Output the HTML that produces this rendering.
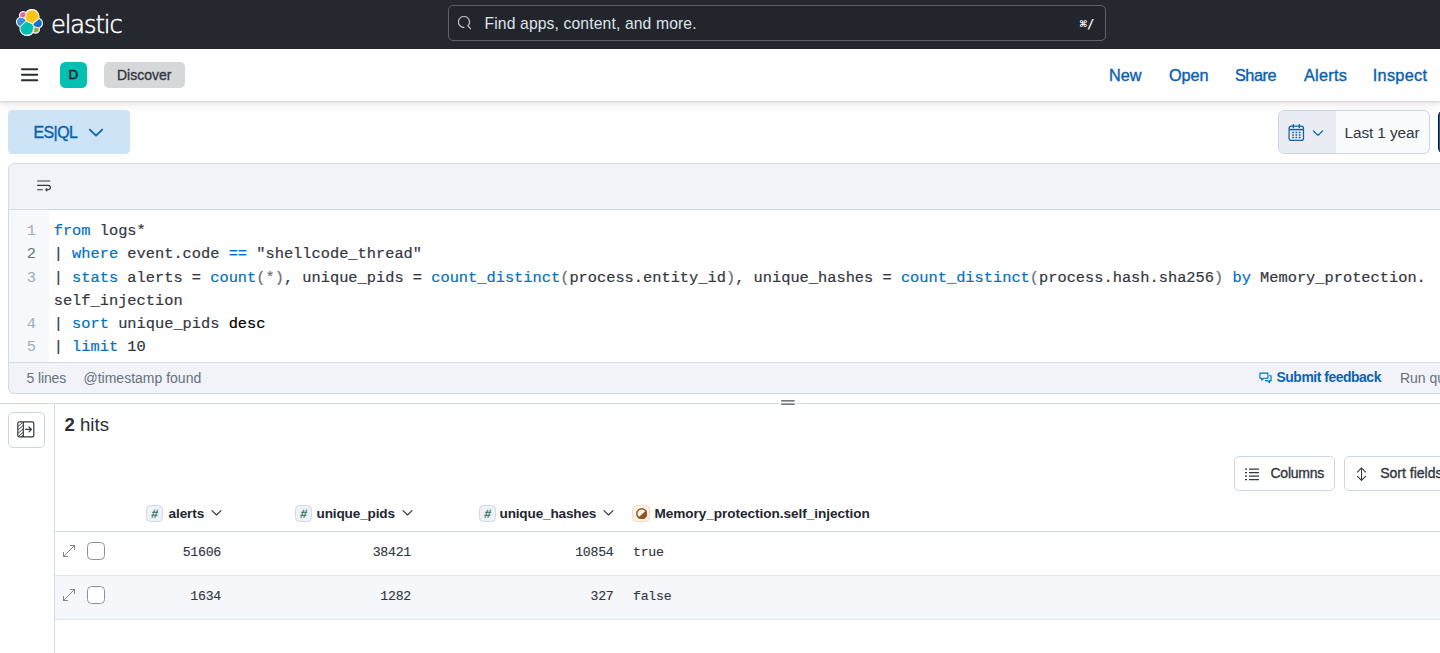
<!DOCTYPE html>
<html lang="en">
<head>
<meta charset="utf-8">
<title>Discover - Elastic</title>
<style>
*{box-sizing:border-box;margin:0;padding:0}
html,body{width:1440px;height:653px;overflow:hidden;background:#fff}
body{font-family:"Liberation Sans",sans-serif;color:#343741;position:relative;-webkit-font-smoothing:antialiased}
.abs{position:absolute}
.t{position:absolute;white-space:nowrap;line-height:1}
/* top dark header */
#hdr{left:0;top:0;width:1440px;height:49px;background:#25282f}
#search{left:448px;top:5px;width:658px;height:36px;border:1px solid #5d626e;border-radius:5px;background:#22252c}
/* second bar */
#bar2{left:0;top:49px;width:1440px;height:53px;background:#fff;border-bottom:1px solid #d6dae2;box-shadow:0 .8px 1.5px rgba(0,0,0,.07),0 2.1px 4.4px rgba(0,0,0,.05),0 5px 11px rgba(0,0,0,.05)}
.lnk{color:#0b62ad;font-size:16.3px;font-weight:normal;-webkit-text-stroke:.4px #0b62ad}
/* editor */
#ed{left:8px;top:163px;width:1460px;height:231px;border:1px solid #d3dae6;border-radius:6px;background:#f1f3f9;overflow:hidden}
#code{left:0;top:45px;width:1460px;height:154px;background:#fff;border-top:1px solid #d3dae6;border-bottom:1px solid #d3dae6}
#gut{left:0;top:0;width:40px;height:152px;background:#f7f8fc}
.ln,.cl{position:absolute;font-family:"Liberation Mono",monospace;font-size:15.35px;line-height:23.1px;height:23.1px;white-space:pre}
.ln{left:0;width:27px;text-align:right;color:#a2abba}
.ln.cur{color:#69707d}
.cl{left:44.7px;color:#343741;-webkit-text-stroke:.2px}
.k{color:#0071c2}
.d{color:#000;-webkit-text-stroke:.22px #000}
.g{color:#69707d}
.sub{color:#69707d;font-size:14px}
/* table */
.mono{font-family:"Liberation Mono",monospace;font-size:13.2px;color:#343741;-webkit-text-stroke:.15px;margin-top:.6px;letter-spacing:-.25px}
.th{font-size:13.6px;font-weight:bold;color:#24262f}
.tok{position:absolute;width:17px;height:17.4px;margin-top:-.4px;border:1px solid #d0d8e6;border-radius:4.5px;background:#eff2f8}
.cb{position:absolute;margin-left:-.5px;width:18px;height:18px;border:1px solid #8e9199;border-radius:4.5px;background:#fff}
.btn{position:absolute;border:1px solid #ccd5e3;border-radius:5px;background:#fff}
/* width fitting */
#ph{letter-spacing:.13px}
#disc{letter-spacing:0px}
#l1{margin-left:-1px}
#l2{margin-left:-.5px;letter-spacing:-.1px}
#l3{letter-spacing:-.5px}
#l4{letter-spacing:.25px}
#l5{letter-spacing:.29px;margin-left:-1.25px}
#esql{letter-spacing:-.55px}
#ly{letter-spacing:-.1px}
#f1{letter-spacing:-.12px}
#hits{margin-left:1px}
#colb{letter-spacing:-.25px;margin-left:1px}
#sortb{margin-left:.7px}
#f4{margin-left:-.6px}
#f3{margin-left:0px;letter-spacing:-.45px}
#h1{margin-left:1px;letter-spacing:-.1px}
#h2{letter-spacing:-.15px}
#h3{letter-spacing:-.17px}
#h4{letter-spacing:-.05px;margin-left:.5px}
#kbd{letter-spacing:.6px;margin-left:.7px}
</style>
</head>
<body>
<!-- HEADER -->
<div id="hdr" class="abs">
  <svg class="abs" style="left:16px;top:9px" width="27" height="27" viewBox="0 0 32 32">
    <path fill="#fff" d="M32 16.77a6.334 6.334 0 0 0-1.14-3.63 6.298 6.298 0 0 0-3.03-2.33 9.04 9.04 0 0 0 .17-1.71 9.1 9.1 0 0 0-1.75-5.37A9.1 9.1 0 0 0 21.69.39a9.07 9.07 0 0 0-5.63-.06 9.1 9.1 0 0 0-4.6 3.26 4.84 4.84 0 0 0-5.99.03 4.86 4.86 0 0 0-1.52 5.78A6.39 6.39 0 0 0 .9 11.74 6.35 6.35 0 0 0 0 15.27a6.35 6.35 0 0 0 1.15 3.64 6.32 6.32 0 0 0 3.05 2.32 9.1 9.1 0 0 0 1.58 7.08 9.1 9.1 0 0 0 4.55 3.3 9.05 9.05 0 0 0 5.62.01 9.07 9.07 0 0 0 4.57-3.27 4.82 4.82 0 0 0 2.96 1.02 4.85 4.85 0 0 0 4.54-6.57 6.4 6.4 0 0 0 3.06-2.36 6.36 6.36 0 0 0 .92-3.67"/>
    <path fill="#FEC514" d="M12.58 13.787l7.002 3.211 7.066-6.213a7.85 7.85 0 0 0 .152-1.557c0-4.287-3.472-7.763-7.754-7.763a7.75 7.75 0 0 0-6.39 3.366l-1.178 6.108 1.102 2.848z"/>
    <path fill="#00BFB3" d="M5.333 21.215a7.94 7.94 0 0 0-.149 1.581c0 4.3 3.498 7.787 7.795 7.787a7.78 7.78 0 0 0 6.41-3.394l1.165-6.08-1.556-2.976-7.03-3.208-6.635 6.29z"/>
    <path fill="#e95e9f" d="M5.288 9.067l4.8 1.137L11.14 4.74a3.785 3.785 0 0 0-2.29-.77 3.802 3.802 0 0 0-3.8 3.802c0 .456.085.892.237 1.295"/>
    <path fill="#3b90d9" d="M4.872 10.214C2.728 10.925 1.231 12.986 1.231 15.284c0 2.237 1.381 4.234 3.455 5.023l6.735-6.1-1.237-2.647-5.312-1.346z"/>
    <path fill="#a2aa3c" d="M20.874 27.189a3.768 3.768 0 0 0 2.285.776 3.802 3.802 0 0 0 3.8-3.801c0-.457-.084-.893-.236-1.296l-4.795-1.124-1.054 5.445z"/>
    <path fill="#1a73c8" d="M21.85 20.563l5.28 1.237c2.146-.71 3.643-2.773 3.643-5.072 0-2.233-1.385-4.234-3.46-5.02l-6.907 6.063 1.444 2.792z"/>
  </svg>
  <div id="wm" class="t" style="left:51px;top:13px;font-family:'DejaVu Sans Light','DejaVu Sans',sans-serif;font-weight:200;font-size:24px;color:#fff;letter-spacing:-1.05px;-webkit-text-stroke:.55px #fff">elastic</div>
  <div id="search" class="abs">
    <svg class="abs" style="left:8.6px;top:10px" width="13.6" height="13.6" viewBox="0 0 16 16"><path fill="#cfd2d9" stroke="#cfd2d9" stroke-width=".35" d="M11.271 11.978l3.872 3.873a.502.502 0 0 0 .708 0 .5.5 0 0 0 0-.708l-3.565-3.564c2.38-2.747 2.267-6.923-.342-9.532-2.73-2.73-7.17-2.73-9.898 0-2.728 2.729-2.728 7.17 0 9.9a6.955 6.955 0 0 0 4.949 2.05.5.5 0 0 0 0-1 5.96 5.96 0 0 1-4.242-1.757 6.01 6.01 0 0 1 0-8.486c2.337-2.34 6.143-2.34 8.484 0a6.01 6.01 0 0 1 0 8.486.5.5 0 0 0 0 .708l.034.03z"/></svg>
    <div id="ph" class="t" style="left:35.5px;top:9.8px;font-size:15.7px;color:#dfe2e8">Find apps, content, and more.</div>
    <div id="kbd" class="t" style="left:630px;top:12px;font-family:'DejaVu Sans Mono','Liberation Mono',monospace;font-weight:bold;font-size:12px;color:#fff;letter-spacing:0px">&#8984;/</div>
  </div>
</div>
<div id="bar2" class="abs">
  <svg class="abs" style="left:20px;top:18px" width="20" height="16" viewBox="0 0 20 16"><path d="M2 2.3h15.2M2 7.8h15.2M2 13.3h15.2" stroke="#2b2e38" stroke-width="2.1" stroke-linecap="round" fill="none"/></svg>
  <div class="abs" style="left:60.3px;top:12.6px;width:26.3px;height:26.3px;border-radius:5.5px;background:#00bfb3"></div>
  <div id="avD" class="t" style="left:60.3px;top:18.8px;width:26.3px;text-align:center;font-size:13.4px;color:#1a1c21;-webkit-text-stroke:.5px #1a1c21">D</div>
  <div class="abs" style="left:104px;top:13px;width:81px;height:25.5px;border-radius:5px;background:#d6d7d9"></div>
  <div id="disc" class="t" style="left:117px;top:18.6px;font-size:14px;color:#343741;-webkit-text-stroke:.35px #343741">Discover</div>
  <div id="l1" class="t lnk" style="left:1110px;top:18px">New</div>
  <div id="l2" class="t lnk" style="left:1169.5px;top:18px">Open</div>
  <div id="l3" class="t lnk" style="left:1235px;top:18px">Share</div>
  <div id="l4" class="t lnk" style="left:1304px;top:18px">Alerts</div>
  <div id="l5" class="t lnk" style="left:1374px;top:18px">Inspect</div>
</div>
<!-- QUERY BAR -->
<div class="abs" style="left:8px;top:110px;width:122px;height:44px;border-radius:4.5px;background:#cce4f5"></div>
<div id="esql" class="t" style="left:33.5px;top:124.6px;font-size:15.9px;color:#0b62ad;-webkit-text-stroke:.4px #0b62ad">ES|QL</div>
<svg class="abs" style="left:88px;top:127.2px" width="16" height="12" viewBox="0 0 16 12"><path d="M1.8 2.6L8 8.6l6.2-6" stroke="#0b62ad" stroke-width="1.8" fill="none" stroke-linecap="round" stroke-linejoin="round"/></svg>
<div class="abs" style="left:1278px;top:110px;width:152px;height:44px;border:1px solid #ccd5e3;border-radius:6px;background:#f9fbfd;overflow:hidden">
  <div class="abs" style="left:0;top:0;width:57px;height:42px;background:#e9edf3"></div>
</div>
<svg class="abs" style="left:1288.2px;top:123.6px" width="17" height="18" viewBox="0 0 17 18" fill="none" stroke="#0b64b0" stroke-width="1.25"><rect x="1.1" y="2.2" width="14.4" height="14.2" rx="2.2"/><path d="M1.1 5.6h14.4" stroke-width="1.5"/><path d="M5.3 .8v2.6M11.3 .8v2.6" stroke-width="1.5" stroke-linecap="round"/><path d="M4.2 8.6h1.7M7.5 8.6h1.7M10.8 8.6h1.7M4.2 11h1.7M7.5 11h1.7M10.8 11h1.7M4.2 13.4h1.7M7.5 13.4h1.7M10.8 13.4h1.7" stroke-width="1.5"/></svg>
<svg class="abs" style="left:1312.2px;top:128.6px" width="12" height="9" viewBox="0 0 12 9"><path d="M1.5 2l4.5 4.4L10.5 2" stroke="#006bb8" stroke-width="1.3" fill="none" stroke-linecap="round" stroke-linejoin="round"/></svg>
<div id="ly" class="t" style="left:1344.5px;top:124.5px;font-size:15.4px;color:#343741">Last 1 year</div>
<div class="abs" style="left:1437.6px;top:111.4px;width:10px;height:42px;border-radius:5px 0 0 5px;background:#0b64b0;border:1.4px solid #10131a;border-right:0"></div>
<!-- EDITOR -->
<div id="ed" class="abs">
  <svg class="abs" style="left:27.3px;top:15.3px" width="16" height="14" viewBox="0 0 16 14" fill="none" stroke="#343741" stroke-width="1.1" stroke-linejoin="round"><path d="M1.2 2h13M1.2 6.4h11a2.2 2.2 0 0 1 0 4.4H10M1.2 10.8h5.6"/><path d="M11 9.4L9.4 10.8 11 12.2z" fill="#343741" stroke-width=".8"/></svg>
  <div id="code" class="abs"><div id="gut" class="abs"></div>
    <div class="ln" style="top:10.3px">1</div>
    <div class="cl" id="c0" style="top:10.3px"><span class="k">from</span> logs*</div>
    <div class="ln cur" style="top:33.4px">2</div>
    <div class="cl" id="c1" style="top:33.4px">| <span class="k">where</span> event.code <span class="k">==</span> "shellcode_thread"</div>
    <div class="ln" style="top:56.5px">3</div>
    <div class="cl" id="c2" style="top:56.5px">| <span class="k">stats</span> alerts = <span class="k">count</span><span class="g">(*)</span>, unique_pids = <span class="k">count_distinct</span><span class="g">(</span>process.entity_id<span class="g">)</span>, unique_hashes = <span class="k">count_distinct</span><span class="g">(</span>process.hash.sha256<span class="g">)</span> <span class="k">by</span> Memory_protection.</div>
    <div class="cl" id="c3" style="top:79.6px">self_injection</div>
    <div class="ln" style="top:102.7px">4</div>
    <div class="cl" id="c4" style="top:102.7px">| <span class="k">sort</span> unique_pids <span class="d">desc</span></div>
    <div class="ln" style="top:125.8px">5</div>
    <div class="cl" id="c5" style="top:125.8px">| <span class="k">limit</span> 10</div>
  </div>
  <div id="f1" class="t sub" style="left:17.5px;top:206.5px">5 lines</div>
  <div id="f2" class="t sub" style="left:74.5px;top:206.5px">@timestamp found</div>
  <svg class="abs" style="left:1250px;top:208.3px" width="13" height="12" viewBox="0 0 14 13" fill="none" stroke="#006bb8" stroke-width="1.2" stroke-linejoin="round"><path d="M1 1.2h8.6v5.6H5.2L3 8.8v-2H1z"/><path d="M11 4h2v5.4h-1.6v2L9.2 9.4H6.4"/></svg>
  <div id="f3" class="t" style="left:1267.5px;top:206.6px;font-size:13.9px;font-weight:bold;color:#0b64b0">Submit feedback</div>
  <div id="f4" class="t sub" style="left:1391.5px;top:206.5px">Run query</div>
</div>
<!-- RESULTS -->
<div class="abs" style="left:0;top:403px;width:1440px;height:1px;background:#d3dae6"></div>
<div class="abs" style="left:54px;top:403px;width:1px;height:250px;background:#d3dae6"></div>
<div class="abs" style="left:780px;top:399px;width:16px;height:7px;background:#fff"></div>
<svg class="abs" style="left:780px;top:398px" width="16" height="9" viewBox="0 0 16 9"><path d="M1.1 2.85h13.6M1.1 6.05h13.6" stroke="#4a4e59" stroke-width="1.3" fill="none"/></svg>
<div class="btn" style="left:8px;top:412px;width:36.5px;height:36px"></div>
<svg class="abs" style="left:17px;top:421px" width="18" height="17" viewBox="0 0 18 17" fill="none" stroke="#343741" stroke-width="1.2"><rect x=".8" y=".8" width="16" height="15" rx="1.6"/><path d="M6.3 1v15"/><path d="M1.2 5.4l4.6-4M1.2 8.8l4.8-4.2M1.2 12.2l4.8-4.2M1.6 15.2l4.4-3.8M4 16l2-1.8" stroke-width=".9"/><path d="M8.6 8.4h5.6M12 6l2.4 2.4L12 10.8" stroke-linecap="round" stroke-linejoin="round"/></svg>
<div id="hits" class="t" style="left:63.5px;top:415.8px;font-size:18.6px;color:#2b2e38"><b>2</b> hits</div>
<div class="btn" style="left:1233.5px;top:456px;width:101px;height:35px"></div>
<svg class="abs" style="left:1245px;top:467.7px" width="14" height="13" viewBox="0 0 14 13" fill="none" stroke="#343741" stroke-width="1.3"><path d="M4 1.2h10M4 4.7h10M4 8.2h10M4 11.7h10"/><path d="M0 1.2h2M0 4.7h2M0 8.2h2M0 11.7h2"/></svg>
<div id="colb" class="t" style="left:1269.5px;top:466.2px;font-size:14px;color:#343741;-webkit-text-stroke:.35px #343741">Columns</div>
<div class="btn" style="left:1343.5px;top:456px;width:120px;height:35px"></div>
<svg class="abs" style="left:1355px;top:466.8px" width="13" height="14.4" viewBox="0 0 13 15" fill="none" stroke="#343741" stroke-width="1.1" stroke-linejoin="round"><path d="M6.5 1v13"/><path d="M2 5.6L6.5 1 11 5.6M2 9.4L6.5 14 11 9.4"/></svg>
<div id="sortb" class="t" style="left:1379.5px;top:466.2px;font-size:14px;color:#343741;-webkit-text-stroke:.35px #343741">Sort fields</div>
<!-- TABLE -->
<div class="tok" style="left:146px;top:505px"></div><div class="t" style="left:146px;top:507.5px;width:17px;text-align:center;font-size:12.5px;font-weight:bold;font-style:italic;color:#387765;transform:skewX(-8deg)">#</div><div id="h1" class="t th" style="left:167.5px;top:506.5px">alerts</div><svg class="abs" style="left:211px;top:509px" width="11" height="8" viewBox="0 0 11 8"><path d="M1 1.6l4.5 4.4L10 1.6" stroke="#343741" stroke-width="1.15" fill="none" stroke-linecap="round" stroke-linejoin="round"/></svg>
<div class="tok" style="left:295px;top:505px"></div><div class="t" style="left:295px;top:507.5px;width:17px;text-align:center;font-size:12.5px;font-weight:bold;font-style:italic;color:#387765;transform:skewX(-8deg)">#</div><div id="h2" class="t th" style="left:316.5px;top:506.5px">unique_pids</div><svg class="abs" style="left:401.5px;top:509px" width="11" height="8" viewBox="0 0 11 8"><path d="M1 1.6l4.5 4.4L10 1.6" stroke="#343741" stroke-width="1.15" fill="none" stroke-linecap="round" stroke-linejoin="round"/></svg>
<div class="tok" style="left:478.5px;top:505px"></div><div class="t" style="left:478.5px;top:507.5px;width:17px;text-align:center;font-size:12.5px;font-weight:bold;font-style:italic;color:#387765;transform:skewX(-8deg)">#</div><div id="h3" class="t th" style="left:499.5px;top:506.5px">unique_hashes</div><svg class="abs" style="left:603px;top:509px" width="11" height="8" viewBox="0 0 11 8"><path d="M1 1.6l4.5 4.4L10 1.6" stroke="#343741" stroke-width="1.15" fill="none" stroke-linecap="round" stroke-linejoin="round"/></svg>
<div class="tok" style="left:632.2px;top:505px;width:17.5px;background:#fdf1e6;border-color:#f6dac4"></div>
<svg class="abs" style="left:635.6px;top:507.9px" width="11.4" height="11.4" viewBox="0 0 11 11"><circle cx="5.5" cy="5.5" r="4.7" fill="#fdf5ee" stroke="#8a5a23" stroke-width="1.4"/><path d="M9.4 2.6A4.8 4.8 0 1 1 2.2 9.1z" fill="#8a5a23"/></svg>
<div id="h4" class="t th" style="left:654px;top:506.5px">Memory_protection.self_injection</div>
<div class="abs" style="left:55px;top:531px;width:1385px;height:1px;background:#d3dae6"></div>
<div class="abs" style="left:55px;top:575px;width:1385px;height:1px;background:#dfe5ef"></div>
<div class="abs" style="left:55px;top:576px;width:1385px;height:43px;background:#f5f7fb"></div>
<div class="abs" style="left:55px;top:619px;width:1385px;height:1px;background:#dfe5ef"></div>
<svg class="abs" style="left:62px;top:544px" width="14" height="14" viewBox="0 0 14 14" fill="none" stroke="#7a7f89" stroke-width=".95" stroke-linecap="round" stroke-linejoin="round"><path d="M1.5 12.5l11-11M8.4 1.5h4.1v4.1M1.5 8.4v4.1h4.1"/></svg><div class="cb" style="left:87.5px;top:541.5px"></div>
<svg class="abs" style="left:62px;top:588px" width="14" height="14" viewBox="0 0 14 14" fill="none" stroke="#7a7f89" stroke-width=".95" stroke-linecap="round" stroke-linejoin="round"><path d="M1.5 12.5l11-11M8.4 1.5h4.1v4.1M1.5 8.4v4.1h4.1"/></svg><div class="cb" style="left:87.5px;top:585.5px"></div>
<div id="r11" class="t mono" style="left:121px;top:545px;width:100px;text-align:right">51606</div>
<div id="r12" class="t mono" style="left:311px;top:545px;width:100px;text-align:right">38421</div>
<div id="r13" class="t mono" style="left:513.5px;top:545px;width:100px;text-align:right">10854</div>
<div id="r14" class="t mono" style="left:633px;top:545px">true</div>
<div id="r21" class="t mono" style="left:121px;top:589px;width:100px;text-align:right">1634</div>
<div id="r22" class="t mono" style="left:311px;top:589px;width:100px;text-align:right">1282</div>
<div id="r23" class="t mono" style="left:513.5px;top:589px;width:100px;text-align:right">327</div>
<div id="r24" class="t mono" style="left:633px;top:589px">false</div>
</body>
</html>
